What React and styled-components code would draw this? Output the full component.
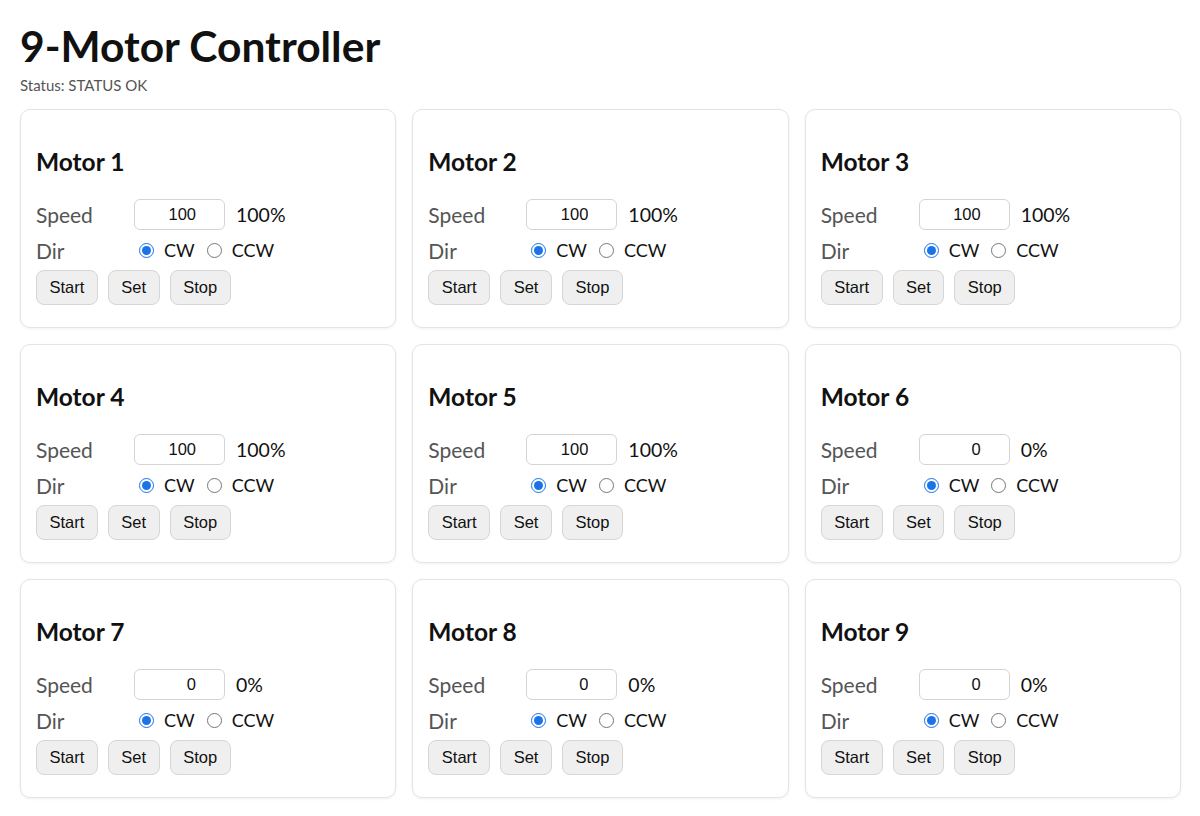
import React from "react";
import styled, { createGlobalStyle } from "styled-components";

const GlobalStyle = createGlobalStyle`
  html, body {
    margin: 0;
    padding: 0;
    background: #ffffff;
  }
  body {
    font-family: "Lato", "Noto Sans", sans-serif;
    color: #111;
  }
`;

const Page = styled.div`
  padding: 20px 19px 20px 20px;
`;

const Title = styled.h1`
  margin: 2px 0 0;
  font-size: 42.5px;
  line-height: 48px;
  font-weight: 700;
  color: #111;
`;

const Status = styled.div`
  margin-top: 6px;
  font-size: 15px;
  line-height: 18px;
  color: #555;
`;

const Grid = styled.div`
  margin-top: 15px;
  display: grid;
  grid-template-columns: repeat(3, 1fr);
  gap: 16px;
`;

const Card = styled.div`
  border: 1px solid #e4e4e4;
  border-radius: 10px;
  box-shadow: 0 1px 3px rgba(0, 0, 0, 0.06);
  padding: 16px 16px 22px 15px;
  background: #fff;
`;

const CardTitle = styled.h3`
  margin: 22px 0 22px;
  font-size: 24.5px;
  line-height: 28px;
  font-weight: 700;
  color: #111;
`;

const Row = styled.div`
  display: flex;
  align-items: center;
  height: 32px;
  margin-bottom: 4px;
`;

const Label = styled.span`
  width: 98px;
  flex: none;
  font-size: 21px;
  color: #555;
`;

const SpeedInput = styled.input`
  box-sizing: border-box;
  width: 91px;
  height: 31px;
  border: 1px solid #d4d4d4;
  border-radius: 6px;
  padding: 0 28px 0 6px;
  text-align: right;
  font-family: "Liberation Sans", Arial, sans-serif;
  font-size: 16.5px;
  color: #111;
  background: #fff;
  outline: none;
`;

const Percent = styled.span`
  margin-left: 11px;
  font-size: 19.5px;
  color: #111;
`;

const Radio = styled.input`
  width: 15px;
  height: 15px;
  margin: 0 10px 0 ${(p) => (p.$first ? 5 : 12)}px;
  accent-color: #1a73e8;
`;

const RadioText = styled.span`
  font-size: 18px;
  color: #111;
`;

const Buttons = styled.div`
  display: flex;
  gap: 10px;
`;

const Button = styled.button`
  height: 35px;
  padding: 0 12.5px;
  border: 1px solid #d6d6d6;
  border-radius: 8px;
  background: #efefef;
  font-family: "Liberation Sans", Arial, sans-serif;
  font-size: 16.5px;
  color: #111;
  cursor: pointer;
`;

const motors = [100, 100, 100, 100, 100, 0, 0, 0, 0];

const MotorCard = ({ index, speed }) => (
  <Card>
    <CardTitle>Motor {index}</CardTitle>
    <Row>
      <Label>Speed</Label>
      <SpeedInput type="text" defaultValue={speed} />
      <Percent>{speed}%</Percent>
    </Row>
    <Row>
      <Label>Dir</Label>
      <Radio $first type="radio" name={`dir${index}`} defaultChecked />
      <RadioText>CW</RadioText>
      <Radio type="radio" name={`dir${index}`} />
      <RadioText>CCW</RadioText>
    </Row>
    <Buttons>
      <Button>Start</Button>
      <Button>Set</Button>
      <Button>Stop</Button>
    </Buttons>
  </Card>
);

export default function App() {
  return (
    <>
      <GlobalStyle />
      <Page>
        <Title>9-Motor Controller</Title>
        <Status>Status: STATUS OK</Status>
        <Grid>
          {motors.map((s, i) => (
            <MotorCard key={i} index={i + 1} speed={s} />
          ))}
        </Grid>
      </Page>
    </>
  );
}
